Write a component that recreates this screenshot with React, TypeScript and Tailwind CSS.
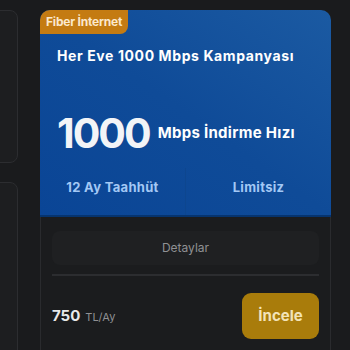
export default function App() {
  return (
    <div
      className="w-[350px] h-[350px] overflow-hidden bg-[#1a1b1d] flex gap-[22px] pt-[10px]"
      style={{ fontFamily: "Inter, 'Noto Sans', sans-serif" }}
    >
      <div className="-ml-[42px] w-[60px] shrink-0 flex flex-col gap-[19px]">
        <div className="shrink-0 h-[153px] rounded-[8px] border border-[#2c2d30] bg-[#1d1e20]" />
        <div className="shrink-0 h-[200px] rounded-[8px] border border-[#2c2d30] bg-[#1d1e20]" />
      </div>

      <div className="w-[291px] shrink-0 rounded-t-[10px] overflow-hidden flex flex-col">
        <div className="h-[207px] shrink-0 bg-gradient-to-tr from-[#0a4596] via-[#0f4b98] to-[#1b5aa2] flex flex-col border-b-2 border-[#06346f]">
          <div className="self-start h-[24px] px-[6px] flex items-center rounded-br-[8px] bg-[#c47b12] text-[12px] tracking-[-0.2px] font-bold text-[#fbe8cc]">
            Fiber İnternet
          </div>
          <div className="px-[17px] pt-[11px] text-[14px] font-bold text-white tracking-[0.6px]">
            Her Eve 1000 Mbps Kampanyası
          </div>
          <div className="px-[17px] mt-[47px] flex items-center gap-[8px]">
            <span className="text-[41px] leading-none font-bold text-[#f2f4f7] tracking-[-2px]">1000</span>
            <span className="text-[15px] font-bold text-white tracking-[0.3px]">Mbps İndirme Hızı</span>
          </div>
          <div className="mt-[14px] flex flex-1">
            <div className="flex-1 flex items-center justify-center text-[13px] font-bold text-[#a3c8f5] border-r border-[#0d468f] pb-[8px] tracking-[0.3px]">
              12 Ay Taahhüt
            </div>
            <div className="flex-1 flex items-center justify-center text-[13px] font-bold text-[#a3c8f5] pb-[8px] tracking-[0.3px]">
              Limitsiz
            </div>
          </div>
        </div>

        <div className="flex-1 bg-[#1b1c1e] border-x border-[#2a2b2e] px-[11px] pt-[14px] flex flex-col">
          <div className="h-[34px] rounded-[8px] bg-[#1f2022] flex items-center justify-center text-[12px] text-[#8f9093]">
            Detaylar
          </div>
          <div className="mt-[9px] h-[2px] bg-[#2c2d30]" />
          <div className="mt-[17px] flex items-center justify-between">
            <div className="flex items-baseline gap-[5px]">
              <span className="text-[15px] font-bold text-[#e8e9ea]">750</span>
              <span className="text-[11px] text-[#8f9093]">TL/Ay</span>
            </div>
            <div className="w-[77px] h-[46px] rounded-[9px] bg-[#a97c0b] flex items-center justify-center text-[15px] font-bold text-[#f3e3b8]">
              İncele
            </div>
          </div>
        </div>
      </div>
    </div>
  )
}
